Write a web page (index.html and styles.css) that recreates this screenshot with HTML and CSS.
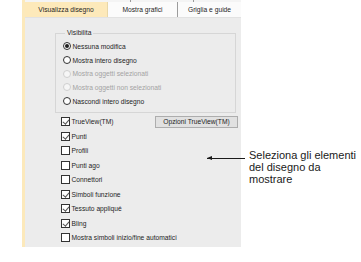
FILE: index.html
```html
<!DOCTYPE html>
<html>
<head>
<meta charset="utf-8">
<link rel="stylesheet" href="styles.css">
</head>
<body>
<div class="page">
  <div class="panel">
    <div class="topstrip"><span class="tick t1"></span><span class="tick t2"></span></div>
    <div class="tabs">
      <div class="tab active">Visualizza disegno</div>
      <div class="tab">Mostra grafici</div>
      <div class="tab last">Griglia e guide</div>
    </div>
    <div class="body">
      <fieldset class="group">
        <legend>Visibilita</legend>
        <div class="radio"><span class="rb on"></span>Nessuna modifica</div>
        <div class="radio"><span class="rb"></span>Mostra intero disegno</div>
        <div class="radio dis"><span class="rb"></span>Mostra oggetti selezionati</div>
        <div class="radio dis"><span class="rb"></span>Mostra oggetti non selezionati</div>
        <div class="radio"><span class="rb"></span>Nascondi intero disegno</div>
      </fieldset>
      <div class="checks">
        <div class="check first"><span class="cb on"></span>TrueView(TM)<button class="btn">Opzioni TrueView(TM)</button></div>
        <div class="check"><span class="cb on"></span>Punti</div>
        <div class="check"><span class="cb"></span>Profili</div>
        <div class="check"><span class="cb"></span>Punti ago</div>
        <div class="check"><span class="cb"></span>Connettori</div>
        <div class="check"><span class="cb on"></span>Simboli funzione</div>
        <div class="check"><span class="cb on"></span>Tessuto appliqué</div>
        <div class="check"><span class="cb on"></span>Bling</div>
        <div class="check"><span class="cb"></span>Mostra simboli inizio/fine automatici</div>
      </div>
    </div>
  </div>
  <div class="callout">
    <div class="arrow"><span class="head"></span></div>
    <div class="note">Seleziona gli elementi<br>del disegno da<br>mostrare</div>
  </div>
</div>
</body>
</html>
```

FILE: styles.css
```css
html, body {
  margin: 0;
  padding: 0;
  background: #ffffff;
}
body {
  width: 361px;
  height: 262px;
  overflow: hidden;
  font-family: "Liberation Sans", Arial, sans-serif;
}
.page {
  position: relative;
  width: 361px;
  height: 262px;
}
.panel {
  margin-left: 22px;
  width: 216px;
  height: 247px;
  background: #ececec;
  border-left: 3px solid #fce9bb;
  display: flex;
  flex-direction: column;
  font-size: 6.7px;
  color: #1e1e1e;
}
.topstrip {
  position: relative;
  height: 2px;
  background: #f4f4f4;
}
.tick {
  position: absolute;
  top: 0;
  width: 1px;
  height: 2px;
  background: #9a9a9a;
}
.t1 { left: 105px; }
.t2 { left: 168px; }
.tabs {
  display: flex;
  height: 15px;
  background: #fbfbfb;
  border-bottom: 1px solid #e2e2e2;
}
.tab {
  display: flex;
  align-items: center;
  justify-content: center;
  border-right: 1px solid #9c9c9c;
  box-sizing: border-box;
  height: 100%;
}
.tab.active {
  width: 83px;
  background: #fde9ba;
  border-right: 1px solid #e8d7a8;
}
.tab:nth-child(2) { width: 70px; }
.tab.last { flex: 1; border-right: none; }
.body {
  flex: 1;
  padding: 11px 0 0 30px;
}
.group {
  margin: 0;
  padding: 2.5px 0 4.5px 7px;
  width: 181px;
  box-sizing: border-box;
  border: 1px solid #d6d6d6;
}
.group legend {
  padding: 0 2px;
  margin-left: 2px;
  line-height: 8px;
}
.radio {
  height: 13.7px;
  display: flex;
  align-items: center;
}
.rb {
  width: 8px;
  height: 8px;
  box-sizing: border-box;
  border: 1px solid #333333;
  border-radius: 50%;
  background: #ffffff;
  margin-right: 1.5px;
  display: flex;
  align-items: center;
  justify-content: center;
}
.rb.on::after {
  content: "";
  width: 4px;
  height: 4px;
  border-radius: 50%;
  background: #1e1e1e;
}
.radio.dis { color: #a3a3a3; }
.radio.dis .rb { border-color: #cfcfcf; background: #f6f6f6; }
.checks {
  padding: 1px 0 0 6px;
  display: flex;
  flex-direction: column;
}
.check {
  height: 14.5px;
  display: flex;
  align-items: center;
}
.cb {
  width: 9px;
  height: 9px;
  box-sizing: border-box;
  border: 1px solid #333333;
  background: #ffffff;
  margin-right: 1.5px;
  position: relative;
}
.cb.on::after {
  content: "";
  position: absolute;
  left: 2px;
  top: 0px;
  width: 2.5px;
  height: 5px;
  border-right: 1px solid #555;
  border-bottom: 1px solid #555;
  transform: rotate(40deg);
}
.btn {
  margin-left: auto;
  margin-right: 3px;
  width: 83px;
  height: 12px;
  padding: 0;
  font-family: inherit;
  font-size: 6.7px;
  color: #1e1e1e;
  background: #e1e1e1;
  border: 1px solid #adadad;
  border-radius: 0;
}
.callout {
  position: absolute;
  left: 207px;
  top: 149px;
  display: flex;
  align-items: flex-start;
}
.arrow {
  position: relative;
  width: 38px;
  height: 1px;
  background: #1a1a1a;
  margin-top: 9px;
  margin-right: 4px;
}
.head {
  position: absolute;
  left: 0;
  top: -2px;
  width: 0;
  height: 0;
  border-top: 2.5px solid transparent;
  border-bottom: 2.5px solid transparent;
  border-right: 5px solid #1a1a1a;
}
.note {
  font-family: "Liberation Sans", Arial, sans-serif;
  font-size: 11px;
  line-height: 12px;
  color: #1a1a1a;
  white-space: nowrap;
}
```
